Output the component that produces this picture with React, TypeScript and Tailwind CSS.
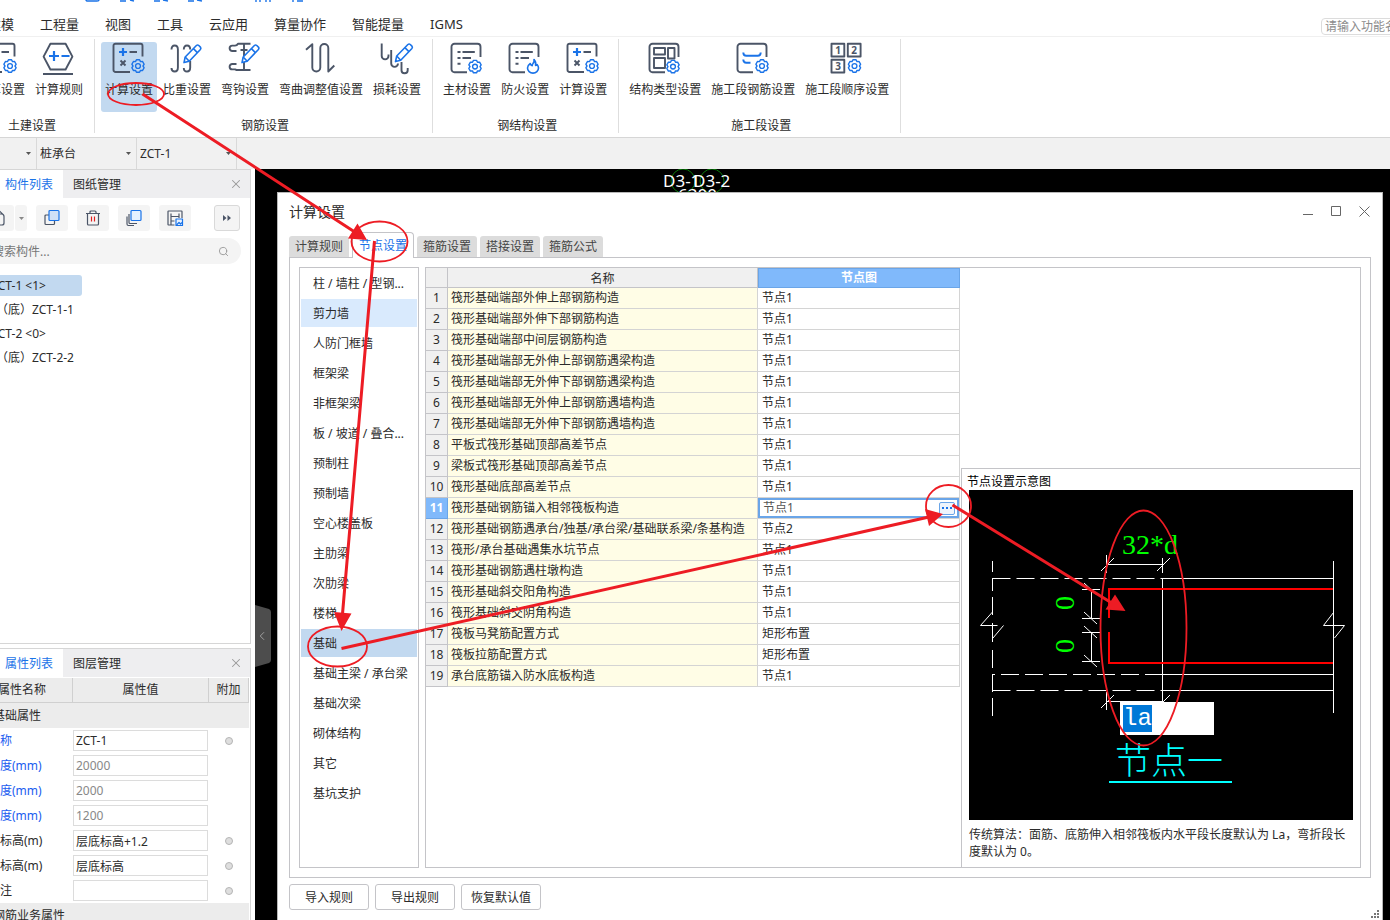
import { useEffect, useRef, useState, type ReactNode } from "react";
import { ChevronLeft, Search, X } from "lucide-react";

const DARK = "#4b5567";
const BLUE = "#1a73e8";
const RED = "#ed1c24";

const menus = ["建模", "工程量", "视图", "工具", "云应用", "算量协作", "智能提量", "IGMS"];

const categories = [
  "柱 / 墙柱 / 型钢...",
  "剪力墙",
  "人防门框墙",
  "框架梁",
  "非框架梁",
  "板 / 坡道 / 叠合...",
  "预制柱",
  "预制墙",
  "空心楼盖板",
  "主肋梁",
  "次肋梁",
  "楼梯",
  "基础",
  "基础主梁 / 承台梁",
  "基础次梁",
  "砌体结构",
  "其它",
  "基坑支护",
];

const nodeRows = [
  ["筏形基础端部外伸上部钢筋构造", "节点1"],
  ["筏形基础端部外伸下部钢筋构造", "节点1"],
  ["筏形基础端部中间层钢筋构造", "节点1"],
  ["筏形基础端部无外伸上部钢筋遇梁构造", "节点1"],
  ["筏形基础端部无外伸下部钢筋遇梁构造", "节点1"],
  ["筏形基础端部无外伸上部钢筋遇墙构造", "节点1"],
  ["筏形基础端部无外伸下部钢筋遇墙构造", "节点1"],
  ["平板式筏形基础顶部高差节点", "节点1"],
  ["梁板式筏形基础顶部高差节点", "节点1"],
  ["筏形基础底部高差节点", "节点1"],
  ["筏形基础钢筋锚入相邻筏板构造", "节点1"],
  ["筏形基础钢筋遇承台/独基/承台梁/基础联系梁/条基构造", "节点2"],
  ["筏形/承台基础遇集水坑节点", "节点1"],
  ["筏形基础钢筋遇柱墩构造", "节点1"],
  ["筏形基础斜交阳角构造", "节点1"],
  ["筏形基础斜交阴角构造", "节点1"],
  ["筏板马凳筋配置方式", "矩形布置"],
  ["筏板拉筋配置方式", "矩形布置"],
  ["承台底筋锚入防水底板构造", "节点1"],
];

const properties = [
  { name: "名称", value: "ZCT-1", key: true, extra: true },
  { name: "长度(mm)", value: "20000", key: true, muted: true },
  { name: "宽度(mm)", value: "2000", key: true, muted: true },
  { name: "高度(mm)", value: "1200", key: true, muted: true },
  { name: "顶标高(m)", value: "层底标高+1.2", extra: true },
  { name: "底标高(m)", value: "层底标高", extra: true },
  { name: "备注", value: "", extra: true },
];

/* ---------- ribbon icons ---------- */

const gearPath =
  Array.from({ length: 6 }, (_, k) =>
    [
      [k * 60 - 14, 6.4],
      [k * 60 + 14, 6.4],
      [k * 60 + 30, 5],
    ]
      .map(([deg, r]) => {
        const a = ((deg - 90) * Math.PI) / 180;
        return `${(r * Math.cos(a)).toFixed(2)} ${(r * Math.sin(a)).toFixed(2)}`;
      })
      .join("L"),
  ).reduce((d, p) => (d ? `${d}L${p}` : `M${p}`), "") + "Z";

function Gear({ x, y }: { x: number; y: number }) {
  return (
    <g transform={`translate(${x} ${y})`} stroke={BLUE} strokeWidth="1.4">
      <path d={gearPath} />
      <circle r="2.4" />
    </g>
  );
}

function Pencil({ x = 0, y = 0 }: { x?: number; y?: number }) {
  return (
    <g transform={`translate(${x} ${y})`} stroke={BLUE} strokeWidth="1.6">
      <path d="M14 20.6l1.200-5.600L26.400 3.500q1.200-1 2.400 0l1.600 1.600q1 1.200 0 2.400L19.200 19.200z" fill="#fff" />
      <path d="M23.400 6.600l4 4M15.200 15l4 4.200" />
    </g>
  );
}

function Icon({ children }: { children: ReactNode }) {
  return (
    <svg
      width="34"
      height="34"
      viewBox="0 0 34 34"
      fill="none"
      stroke={DARK}
      strokeWidth="1.9"
      strokeLinejoin="round"
      aria-hidden="true"
    >
      {children}
    </svg>
  );
}

const sheet = "M17 30.2H4.5a3 3 0 0 1-3-3V4.7a3 3 0 0 1 3-3h23a3 3 0 0 1 3 3V15";

const calcIcon = (
  <Icon>
    <path d="M18 30H3.500a2 2 0 0 1-2-2V3.700a2 2 0 0 1 2-2h25a2 2 0 0 1 2 2V14.500" />
    <path d="M11 6v8M7 10h8" stroke={BLUE} strokeWidth="2.2" />
    <path d="M17.500 10H25M8.500 18.500l5 5m0-5l-5 5" />
    <Gear x={26} y={24} />
  </Icon>
);

const hexIcon = (
  <Icon>
    <path d="M1.600 14.600L8.400 1.700h15.200l6.800 12.900-6.800 12.900H8.400zM1 32h30" />
    <path d="M12 9v10M7 14h10M19.500 14h8" stroke={BLUE} strokeWidth="2.2" />
  </Icon>
);

const weightIcon = (
  <Icon>
    <path d="M1.500 7.500q0-4 3.200-4t3.200 4v18q0 4-3.200 4t-3.200-3.500" />
    <path d="M13.800 7.500q0-4 3.200-4t3.200 4M20.200 19v6.500q0 4-3.200 4t-3.200-3.500" />
    <Pencil />
  </Icon>
);

const hookIcon = (
  <Icon>
    <path d="M8.500 9H4.300a2.700 2.700 0 0 1 0-5.400H7q2 0 3-1.900h12.500M16 1.700V28M8.500 22H4.300a2.700 2.700 0 0 0 0 5.400H7l1.500.6H22.500M12.500 8h7" />
    <Pencil />
  </Icon>
);

const bendIcon = (
  <Icon>
    <path d="M2 7.800l6.300-5.600V25.500a4 4 0 0 0 8 0V6a4 4 0 0 1 8 0v23.500l6-6" />
  </Icon>
);

const lossIcon = (
  <Icon>
    <path d="M1.700 1.500V14a3.400 3.400 0 0 0 6.800 0v-1.500M11.200 8v13.500a3.400 3.400 0 0 0 6.800 0M21.500 20v8.200a3.100 3.100 0 0 0 6.200 0V26" />
    <Pencil x={1.5} y={-1} />
  </Icon>
);

const listLines = <path d="M7.500 10h3M12.500 10h12.300M7.500 16h3M12.500 16h8.500M7.500 21.700h3" />;

const materialIcon = (
  <Icon>
    <path d={sheet} />
    {listLines}
    <Gear x={25} y={24.6} />
  </Icon>
);

const fireIcon = (
  <Icon>
    <path d={sheet} />
    {listLines}
    <path
      d="M26 17.500q.5 2-1 4-.8 1-.8 2.200-1.600-.3-1.900-2.200-2.800 2-2.800 4.600a5.500 5 0 0 0 11 0q0-2-1.400-3.600-.6 1-1.500 1 .8-3.600-1.600-6z"
      stroke={BLUE}
      strokeWidth="1.600"
    />
  </Icon>
);

const typeIcon = (
  <Icon>
    <path d={sheet} />
    <path d="M6 6h11v6.500H6zM20 6h6.500v10.500H20zM6 16h11v10H6z" />
    <Gear x={25} y={24.6} />
  </Icon>
);

const stageBarIcon = (
  <Icon>
    <path d={sheet} />
    <path d="M7.300 10.500q0 3.300 3 3.300h11.400q3 0 3-3.300M7.300 17.500q0 3.200 3 3.200H14.500" stroke={BLUE} />
    <Gear x={26} y={24} />
  </Icon>
);

const orderIcon = (
  <Icon>
    <path d="M1.500 1.700h12.800v12.800H1.500zM17.800 1.700h12.800v12.800H17.800zM1.500 17.700h12.800v12.800H1.500z" />
    <g fill={DARK} stroke="none" fontSize="10" fontWeight="700" textAnchor="middle">
      <text x="8" y="12">1</text>
      <text x="24" y="12">2</text>
      <text x="8" y="28">3</text>
    </g>
    <Gear x={24.5} y={24} />
  </Icon>
);

const ribbon = [
  {
    title: "土建设置",
    items: [
      { label: "计算设置", icon: calcIcon },
      { label: "计算规则", icon: hexIcon },
    ],
  },
  {
    title: "钢筋设置",
    items: [
      { label: "计算设置", icon: calcIcon, active: true },
      { label: "比重设置", icon: weightIcon },
      { label: "弯钩设置", icon: hookIcon },
      { label: "弯曲调整值设置", icon: bendIcon },
      { label: "损耗设置", icon: lossIcon },
    ],
  },
  {
    title: "钢结构设置",
    items: [
      { label: "主材设置", icon: materialIcon },
      { label: "防火设置", icon: fireIcon },
      { label: "计算设置", icon: calcIcon },
    ],
  },
  {
    title: "施工段设置",
    items: [
      { label: "结构类型设置", icon: typeIcon },
      { label: "施工段钢筋设置", icon: stageBarIcon },
      { label: "施工段顺序设置", icon: orderIcon },
    ],
  },
];

function MenuBar() {
  return (
    <header className="border-b border-[#f0f0f0] bg-white">
      <svg width="320" height="2" fill="none" stroke={BLUE} strokeWidth="1.4" className="block" aria-hidden="true">
        <path d="M86 0q0 1 2 1h9q2 0 2-1M120 1h6M130 0l4 1M154 1h6M163 0l5 1M188 1h6M197 0l5 1M256 0v2M260 0v2M266 0v2M270 0v2M293 0v2M297 1h6" />
      </svg>
      <div className="flex h-[34px] items-center justify-between">
        <nav className="-ml-3 flex gap-[26px] pt-2.5 text-[13px] leading-5">
          {menus.map((m) => (
            <button key={m} type="button" className="whitespace-nowrap">
              {m}
            </button>
          ))}
        </nav>
        <div className="w-[69px] overflow-hidden pt-3.5">
          <input
            aria-label="功能搜索"
            placeholder="请输入功能名称"
            className="block h-[17px] w-[120px] rounded-sm border border-[#dcdcdc] px-[3px] text-xs leading-4 placeholder:text-[#8c8c8c]"
          />
        </div>
      </div>
    </header>
  );
}

function Ribbon() {
  return (
    <div className="-ml-[33px] flex h-[101px] border-b border-[#d6d6d6] bg-white pt-0.5 pb-1">
      {ribbon.map((group) => (
        <section
          key={group.title}
          className="flex flex-col items-center justify-between border-r border-[#dedede] pr-1.5 pl-[5px]"
        >
          <div className="flex pt-[3px]">
            {group.items.map((item) => (
              <button
                key={item.label}
                type="button"
                className={`mx-px flex h-[70px] flex-col items-center rounded-[3px] px-1 ${
                  item.active ? "bg-[#c2d9f0]" : ""
                }`}
              >
                {item.icon}
                <span className="mt-1 text-xs leading-5 whitespace-nowrap">{item.label}</span>
              </button>
            ))}
          </div>
          <h2 className="pl-1 text-xs leading-[14px]">{group.title}</h2>
        </section>
      ))}
    </div>
  );
}

function ContextSelect({ label, value }: { label: string; value: string }) {
  return (
    <label className="relative flex w-[100px] items-center border-r border-[#d9d9d9]">
      <span className="sr-only">{label}</span>
      <select className="h-full w-full appearance-none pl-[3px] text-xs" defaultValue={value}>
        <option>{value}</option>
      </select>
      <svg className="pointer-events-none absolute right-[5px]" width="5" height="3" aria-hidden="true">
        <path d="M0 0h5L2.500 3z" fill="#555" />
      </svg>
    </label>
  );
}

function ContextBar() {
  return (
    <div className="-ml-[63px] flex h-[31px] bg-[#f1f1f1]">
      <ContextSelect label="构件分类" value="基础" />
      <ContextSelect label="构件类型" value="桩承台" />
      <ContextSelect label="构件" value="ZCT-1" />
    </div>
  );
}

function PanelTabs({ tabs }: { tabs: string[] }) {
  return (
    <div className="flex h-7 bg-[#eeeef0] text-xs">
      <button type="button" className="w-[63px] bg-white pt-0.5 pr-[5px] text-center text-[#1a73e8]">
        {tabs[0]}
      </button>
      <button type="button" className="px-2.5 pt-0.5">
        {tabs[1]}
      </button>
      <button type="button" aria-label="关闭" className="mr-[7px] ml-auto">
        <X size={14} strokeWidth={1.75} color="#999" />
      </button>
    </div>
  );
}

function ToolButton({ label, children }: { label: string; children: ReactNode }) {
  return (
    <button
      type="button"
      aria-label={label}
      className="flex h-[26px] w-8 items-center justify-center rounded-[3px] bg-[#f4f4f4]"
    >
      <svg width="18" height="18" viewBox="0 0 18 18" fill="none" stroke={DARK} strokeWidth="1.200" strokeLinejoin="round">
        {children}
      </svg>
    </button>
  );
}

function ComponentPanel() {
  const items = ["ZCT-1 <1>", "（底）ZCT-1-1", "ZCT-2 <0>", "（底）ZCT-2-2"];
  return (
    <section className="h-[475px] shrink-0 border-t border-r border-b border-[#d6d6d6] bg-white">
      <PanelTabs tabs={["构件列表", "图纸管理"]} />
      <div className="-ml-[18px] flex items-center pt-[7px] pr-2.5">
        <ToolButton label="新建">
          <path d="M6 5h6.500q2.500 0 2.500 2.500V14q0 2-2 2H6M10 1.500l4.500 4.500" />
        </ToolButton>
        <button
          type="button"
          aria-label="更多新建"
          className="ml-px flex h-[26px] w-3 items-center justify-center rounded-[3px] bg-[#f4f4f4]"
        >
          <svg width="5" height="3" aria-hidden="true">
            <path d="M0 0h5L2.500 3z" fill="#888" />
          </svg>
        </button>
        <div className="ml-[9px] flex gap-[9px]">
          <ToolButton label="复制">
            <path d="M6 6H3Q2 6 2 7v7.500q0 1 1 1h7.500q1 0 1-1V12" />
            <rect x="6" y="1.500" width="10" height="10" rx="1" fill="#cfe0f7" stroke={BLUE} />
          </ToolButton>
          <ToolButton label="删除">
            <path d="M2 4.500h14M6 4.500V3q0-1 1-1h4q1 0 1 1v1.500M3.500 4.500V15q0 1 1 1h9q1 0 1-1V4.500" />
            <path d="M7.500 7.500v5M10.500 7.500v5" stroke="#e02020" />
          </ToolButton>
          <ToolButton label="层间复制">
            <path d="M4 5v8.500q0 1 1 1h7M2 7.500V15q0 1.500 1.500 1.500H9" />
            <rect x="6" y="1.500" width="10" height="10" rx="1" fill="#e6f1ff" stroke={BLUE} />
          </ToolButton>
          <ToolButton label="存档">
            <path d="M8.500 16H2.500Q2 16 2 15.500v-13Q2 2 2.500 2h13q.5 0 .5.500V9M5 16V4.500M5 7.500h8M13 4.500V9M5 12h3.500" />
            <rect x="10" y="10" width="6.500" height="6.500" fill="#e8f2ff" stroke={BLUE} />
            <path d="M10.500 16l2.500-2.500 1.500 1.500 1.500-1.500" stroke={BLUE} />
          </ToolButton>
        </div>
        <button
          type="button"
          aria-label="展开工具栏"
          className="ml-auto flex h-[26px] w-[26px] items-center justify-center rounded-[3px] border border-[#d9d9d9] bg-[#f4f4f4]"
        >
          <svg width="8" height="6" fill={DARK} aria-hidden="true">
            <path d="M0 0l3.500 3L0 6zM4.500 0L8 3 4.500 6z" />
          </svg>
        </button>
      </div>
      <label className="mt-[7px] mr-[9px] -ml-[18px] flex h-[26px] items-center rounded-full bg-[#f4f4f4] pr-3 pl-2.5">
        <span className="sr-only">搜索构件</span>
        <input placeholder="搜索构件..." className="min-w-0 flex-1 pt-0.5 text-xs placeholder:text-[#777]" />
        <Search size={11} color="#999" />
      </label>
      <ul className="mt-[9px] -ml-3 text-xs">
        {items.map((item, i) => (
          <li key={item} className="h-6 pt-0.5">
            <button
              type="button"
              className={`block h-[21px] w-[94px] rounded-[3px] pt-px text-left whitespace-pre ${
                i % 2 ? "pl-2" : "pl-[3px]"
              } ${i === 0 ? "bg-[#c2d9f0]" : ""}`}
            >
              {item}
            </button>
          </li>
        ))}
      </ul>
    </section>
  );
}

function PropertyPanel() {
  return (
    <section className="mt-1 min-h-0 flex-1 overflow-hidden border-t border-r border-[#d6d6d6] bg-white">
      <PanelTabs tabs={["属性列表", "图层管理"]} />
      <table className="mt-px -ml-7 w-[277px] table-fixed border-separate border-spacing-0 text-xs">
        <colgroup>
          <col className="w-[101px]" />
          <col className="w-[136px]" />
          <col />
        </colgroup>
        <thead>
          <tr className="h-[25px] bg-[#ececec]">
            {["属性名称", "属性值", "附加"].map((h) => (
              <th key={h} className="border-r border-b border-[#d0d0d0] p-0 font-normal">
                {h}
              </th>
            ))}
          </tr>
        </thead>
        <tbody>
          <tr className="h-[25px] bg-[#ececec]">
            <td colSpan={3} className="p-0 pl-[21px]">
              基础属性
            </td>
          </tr>
          {properties.map((p) => (
            <tr key={p.name} className="h-[25px]">
              <td className={`p-0 pl-4 ${p.key ? "text-[#1a5cf0]" : ""}`}>{p.name}</td>
              <td className="p-0">
                <input
                  aria-label={p.name}
                  defaultValue={p.value}
                  className={`block h-[21px] w-[135px] border border-[#dcdcdc] px-0.5 text-xs ${
                    p.muted ? "text-[#888]" : ""
                  }`}
                />
              </td>
              <td className="p-0">
                {p.extra && (
                  <input
                    type="radio"
                    aria-label={`${p.name}附加`}
                    className="mx-auto block size-2 appearance-none rounded-full border border-[#b5b5b5] bg-[#dedede]"
                  />
                )}
              </td>
            </tr>
          ))}
          <tr className="h-[25px] bg-[#ececec]">
            <td colSpan={3} className="p-0 pl-[21px]">
              钢筋业务属性
            </td>
          </tr>
        </tbody>
      </table>
    </section>
  );
}

function NodeDiagram() {
  const inputRef = useRef<HTMLInputElement>(null);

  useEffect(() => {
    inputRef.current?.focus();
    inputRef.current?.select();
  }, []);

  return (
    <div className="relative h-[330px] w-[384px] bg-black">
      <svg width="384" height="330" viewBox="0 0 384 330" fill="none" stroke="#fff" aria-label="节点一">
        {/* slab outline */}
        <path d="M23.500 71v11M23.500 88v13M23.500 107v18M23.500 133v19M23.500 160v18M23.500 184v18M23.500 208v18" />
        <path d="M23.500 88.500H194M23.500 200.500H194" strokeDasharray="18 6" />
        <path d="M23.500 184.500h2.500M32 184.500H194" strokeDasharray="18 6" />
        <path d="M193.500 88.500H364.500M193.500 184.500H364.500M193.500 200.500H364.500M193.500 88v123M364.500 71V223" />
        {/* break marks */}
        <path d="M23.500 122L11.500 135.500h17M34.500 135.500L24 148M364.500 122.500l-10 13h21l-10 12.500" />
        {/* dimensions */}
        <path d="M137.500 65v18M193.500 68v15M137 74.500h57M132 81l13-13M188 81l13-13" />
        <path d="M137.500 202v18M137 211.500h57M132 218l13-13M193 213l8-8" />
        <path d="M122.500 99.500v29M122.500 142.500v29M113 99.500h18M113 128.500h18M113 142.500h18M113 171.500h18" />
        <path d="M115 93l13 12M115 122l13 12M115 136l13 12M115 165l13 12" />
        {/* rebar */}
        <path d="M364 99H140v29M140 142v31h224" stroke="#f00" strokeWidth="2" />
        <path d="M140 292h123" stroke="#0ff" strokeWidth="2" />
        <g stroke="none" fill="#0f0" fontSize="28" className="[font-family:'Liberation_Serif',serif]">
          <text x="153" y="64">
            32*d
          </text>
          <text transform="translate(105 120) rotate(-90)">0</text>
          <text transform="translate(105 163) rotate(-90)">0</text>
        </g>
        <text
          x="146"
          y="284"
          stroke="none"
          fill="#0ff"
          fontSize="36"
          fontWeight="300"
          className="[font-family:'Noto_Sans_CJK_SC',sans-serif]"
        >
          节点一
        </text>
      </svg>
      <input
        ref={inputRef}
        aria-label="锚固长度"
        defaultValue="la"
        className="absolute top-[212px] left-[151px] h-[33px] w-[94px] bg-white px-[3px] text-2xl leading-7 text-[#444] outline-none selection:bg-[#0078d7] selection:text-white [font-family:'Liberation_Mono',monospace]"
      />
    </div>
  );
}

function NodeTable() {
  return (
    <table className="w-full table-fixed border-separate border-spacing-0 text-xs">
      <colgroup>
        <col className="w-[22px]" />
        <col />
        <col className="w-[202px]" />
      </colgroup>
      <thead>
        <tr className="h-5">
          <th className="border-r border-b border-[#c4c4c8] bg-[#f0f0f0] p-0" />
          <th className="border-r border-b border-[#c4c4c8] bg-[#f0f0f0] p-0 pt-0.5 font-normal">名称</th>
          <th className="border border-[#6aa5e8] bg-[#80b9fb] p-0 font-bold text-white">节点图</th>
        </tr>
      </thead>
      <tbody>
        {nodeRows.map(([name, node], i) => {
          const selected = i === 10;
          return (
            <tr key={name} className="h-[21px]">
              <td
                className={`border-r border-b p-0 text-center ${
                  selected ? "border-[#6aa5e8] bg-[#80b9fb] font-bold text-white" : "border-[#c4c4c8] bg-[#f0f0f0]"
                }`}
              >
                {i + 1}
              </td>
              <td className="border-r border-b border-[#d4d4d4] bg-[#fffde6] p-0 pl-[3px] whitespace-nowrap">{name}</td>
              <td className="border-r border-b border-[#d4d4d4] p-0">
                {selected ? (
                  <div className="flex h-5 items-center justify-between border-2 border-[#6aa5e8] pr-0.5 pl-[3px] text-[#555]">
                    {node}
                    <button
                      type="button"
                      aria-label="选择节点图"
                      className="flex h-[13px] w-4 items-center justify-center gap-0.5 rounded-xs border border-[#6aa5e8] bg-[#eef4fc]"
                    >
                      <i className="size-0.5 bg-[#1a73e8]" />
                      <i className="size-0.5 bg-[#1a73e8]" />
                      <i className="size-0.5 bg-[#1a73e8]" />
                    </button>
                  </div>
                ) : (
                  <span className="pl-1">{node}</span>
                )}
              </td>
            </tr>
          );
        })}
      </tbody>
    </table>
  );
}

function SettingsDialog() {
  const [tab, setTab] = useState("节点设置");
  const tabs = ["计算规则", "节点设置", "箍筋设置", "搭接设置", "箍筋公式"];

  return (
    <div
      role="dialog"
      aria-label="计算设置"
      className="absolute top-[23px] right-[7px] bottom-0 left-[22px] flex flex-col border border-b-0 border-[#b8b8b8] bg-white px-[11px] pb-2.5"
    >
      <div className="flex h-[39px] items-center justify-between pb-0.5">
        <h1 className="text-sm">计算设置</h1>
        <div className="flex gap-[17px] pr-px text-[#666]">
          <button type="button" aria-label="最小化">
            <svg width="11" height="11" stroke="currentColor">
              <path d="M0 8.500h10" />
            </svg>
          </button>
          <button type="button" aria-label="最大化">
            <svg width="11" height="11" stroke="currentColor" fill="none">
              <path d="M.5.500h9v9h-9z" />
            </svg>
          </button>
          <button type="button" aria-label="关闭">
            <svg width="11" height="11" stroke="currentColor">
              <path d="M.5.500l10 10M10.500.500l-10 10" />
            </svg>
          </button>
        </div>
      </div>
      <div role="tablist" className="flex h-[25px] items-end gap-[3px] text-xs">
        {tabs.map((t) =>
          t === tab ? (
            <button
              key={t}
              type="button"
              role="tab"
              aria-selected
              className="relative -mb-px h-[26px] rounded-t border border-b-0 border-[#c4c4c8] bg-white px-1.5 text-[#1a73e8]"
            >
              {t}
            </button>
          ) : (
            <button
              key={t}
              type="button"
              role="tab"
              aria-selected={false}
              onClick={() => setTab(t)}
              className="h-[21px] rounded-t-[3px] bg-[#dcdcdc] px-1.5 text-[#444]"
            >
              {t}
            </button>
          ),
        )}
      </div>
      <div className="flex min-h-0 flex-1 gap-1.5 border border-[#c4c4c8] p-[9px]">
        <ul className="flex w-[120px] flex-col gap-0.5 border border-[#c4c4c8] p-px text-xs">
          {categories.map((c) => (
            <li key={c}>
              <button
                type="button"
                className={`block h-7 w-full pt-0.5 pl-3 text-left whitespace-nowrap ${
                  c === "基础" ? "bg-[#c2d9f0]" : c === "剪力墙" ? "bg-[#d9eafd]" : ""
                }`}
              >
                {c}
              </button>
            </li>
          ))}
        </ul>
        <div className="flex min-w-0 flex-1 border border-[#c4c4c8]">
          <div className="min-w-0 flex-1">
            <NodeTable />
          </div>
          <div className="ml-px flex w-[399px] flex-col justify-end">
            <section className="border-t border-l border-[#c4c4c8] pb-[7px] pl-[7px]">
              <h2 className="-ml-0.5 h-[21px] pt-1 text-xs leading-[18px] text-black">节点设置示意图</h2>
              <NodeDiagram />
              <p className="mt-1.5 w-[384px] text-xs leading-[17px]">
                传统算法：面筋、底筋伸入相邻筏板内水平段长度默认为 La，弯折段长度默认为 0。
              </p>
            </section>
          </div>
        </div>
      </div>
      <div className="mt-1.5 flex gap-1.5 text-xs">
        {["导入规则", "导出规则", "恢复默认值"].map((b) => (
          <button key={b} type="button" className="h-[26px] w-20 rounded-[3px] border border-[#c4c4c8] bg-white pt-0.5">
            {b}
          </button>
        ))}
      </div>
      <svg className="absolute right-[3px] bottom-0.5" width="8" height="8" fill="#777" aria-hidden="true">
        <path d="M6 0h2v2H6zM3 3h2v2H3zM6 3h2v2H6zM0 6h2v2H0zM3 6h2v2H3zM6 6h2v2H6z" />
      </svg>
    </div>
  );
}

function Canvas() {
  return (
    <main className="relative flex-1 bg-black">
      <svg className="absolute top-0 left-[400px]" width="90" height="24" fill="none" aria-hidden="true">
        <circle cx="28" cy="12" r="12" stroke="#0a7a0a" />
        <circle cx="57" cy="12" r="12" stroke="#0a7a0a" />
        <g fill="#fff" fontSize="17">
          <text x="8" y="18">
            D3-1
          </text>
          <text x="38" y="18">
            D3-2
          </text>
          <text x="23" y="32">
            6300
          </text>
        </g>
      </svg>
      <button type="button" aria-label="收起面板" className="absolute top-[436px] left-0 flex h-[62px] w-4 items-center">
        <svg className="absolute inset-0" width="16" height="62" aria-hidden="true">
          <path d="M0 0l14 4q2 1 2 3v48q0 2-2 3L0 62z" fill="#4d4d4d" />
        </svg>
        <ChevronLeft className="relative" size={14} strokeWidth={1.5} color="#aaa" />
      </button>
      <SettingsDialog />
    </main>
  );
}

function Annotations() {
  return (
    <svg
      className="pointer-events-none absolute top-0 left-0"
      width="1390"
      height="920"
      fill="none"
      stroke={RED}
      aria-hidden="true"
    >
      <g strokeWidth="1.800">
        <ellipse cx="136" cy="94" rx="28" ry="11" />
        <ellipse cx="379.500" cy="241.500" rx="28" ry="20" />
        <ellipse cx="337.500" cy="646.500" rx="29.500" ry="20" />
        <ellipse cx="948.500" cy="506" rx="22.500" ry="21" />
        <ellipse cx="1143.500" cy="628" rx="43" ry="117.500" />
      </g>
      <path
        d="M142.500 94L354 231.500M374.500 241L342.500 614M341.500 648.500L929 517M952.500 505L1111 602.500"
        strokeWidth="3"
      />
      <path
        d="M367 240l-9.500-16.500-9.500 15zM341.500 631l-7.500-19 17.500 1.500zM943 514l-18-5 4 17zM1125.500 611l-10.500-16.500-9.500 15z"
        fill={RED}
        stroke="none"
      />
    </svg>
  );
}

export default function App() {
  return (
    <div className="relative flex h-screen flex-col overflow-hidden bg-white text-[#2b2b2b] [font-family:'Noto_Sans','Noto_Sans_CJK_SC',sans-serif]">
      <MenuBar />
      <Ribbon />
      <ContextBar />
      <div className="flex min-h-0 flex-1">
        <aside className="mr-1 flex w-[251px] shrink-0 flex-col overflow-hidden">
          <ComponentPanel />
          <PropertyPanel />
        </aside>
        <Canvas />
      </div>
      <Annotations />
    </div>
  );
}
